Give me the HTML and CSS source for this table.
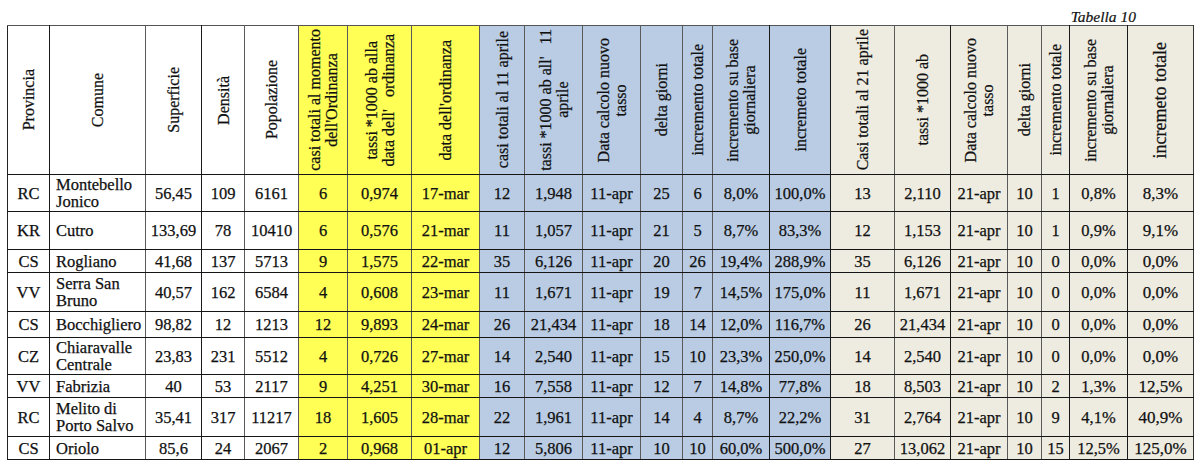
FILE: index.html
```html
<!DOCTYPE html>
<html lang="it">
<head>
<meta charset="utf-8">
<title>Tabella 10</title>
<link rel="stylesheet" href="styles.css">
</head>
<body>
<div class="wrap">
  <div class="caption">Tabella 10</div>
  <table class="grid">
    <colgroup>
      <col style="width:42px"><col style="width:96px"><col style="width:56px"><col style="width:43px"><col style="width:54px">
      <col style="width:49px"><col style="width:64px"><col style="width:68px">
      <col style="width:45px"><col style="width:58px"><col style="width:58px"><col style="width:42px"><col style="width:30px"><col style="width:57px"><col style="width:61px">
      <col style="width:64px"><col style="width:56px"><col style="width:57px"><col style="width:34px"><col style="width:28px"><col style="width:58px"><col style="width:66px">
    </colgroup>
    <thead>
      <tr class="head">
        <th><div class="hc"><span class="v">Provincia</span></div></th>
        <th><div class="hc"><span class="v">Comune</span></div></th>
        <th><div class="hc"><span class="v">Superficie</span></div></th>
        <th><div class="hc"><span class="v">Densità</span></div></th>
        <th><div class="hc"><span class="v">Popolazione</span></div></th>
        <th class="y"><div class="hc"><span class="v">casi totali al momento<br>dell'Ordinanza</span></div></th>
        <th class="y"><div class="hc"><span class="v">tassi *1000 ab alla<br>data dell'&nbsp;&nbsp; ordinanza</span></div></th>
        <th class="y"><div class="hc"><span class="v">data dell'ordinanza</span></div></th>
        <th class="b"><div class="hc"><span class="v">casi totali al 11 aprile</span></div></th>
        <th class="b"><div class="hc"><span class="v">tassi *1000 ab all'&nbsp;&nbsp; 11<br>aprile</span></div></th>
        <th class="b"><div class="hc"><span class="v">Data calcolo nuovo<br>tasso</span></div></th>
        <th class="b"><div class="hc"><span class="v">delta giorni</span></div></th>
        <th class="b"><div class="hc"><span class="v">incremento totale</span></div></th>
        <th class="b"><div class="hc"><span class="v">incremento su base<br>giornaliera</span></div></th>
        <th class="b"><div class="hc"><span class="v">incremeto totale</span></div></th>
        <th class="g"><div class="hc"><span class="v">Casi totali al 21 aprile</span></div></th>
        <th class="g"><div class="hc"><span class="v">tassi *1000 ab</span></div></th>
        <th class="g"><div class="hc"><span class="v">Data calcolo nuovo<br>tasso</span></div></th>
        <th class="g"><div class="hc"><span class="v">delta giorni</span></div></th>
        <th class="g"><div class="hc"><span class="v">incremento totale</span></div></th>
        <th class="g"><div class="hc"><span class="v">incremento su base<br>giornaliera</span></div></th>
        <th class="g last"><div class="hc"><span class="v">incremeto totale</span></div></th>
      </tr>
    </thead>
    <tbody>
      <tr class="r37">
        <td>RC</td><td class="name">Montebello<br>Jonico</td><td>56,45</td><td>109</td><td>6161</td>
        <td class="y">6</td><td class="y">0,974</td><td class="y">17-mar</td>
        <td class="b">12</td><td class="b">1,948</td><td class="b">11-apr</td><td class="b">25</td><td class="b">6</td><td class="b">8,0%</td><td class="b">100,0%</td>
        <td class="g">13</td><td class="g">2,110</td><td class="g">21-apr</td><td class="g">10</td><td class="g">1</td><td class="g">0,8%</td><td class="g last">8,3%</td>
      </tr>
      <tr class="r38">
        <td>KR</td><td class="name">Cutro</td><td>133,69</td><td>78</td><td>10410</td>
        <td class="y">6</td><td class="y">0,576</td><td class="y">21-mar</td>
        <td class="b">11</td><td class="b">1,057</td><td class="b">11-apr</td><td class="b">21</td><td class="b">5</td><td class="b">8,7%</td><td class="b">83,3%</td>
        <td class="g">12</td><td class="g">1,153</td><td class="g">21-apr</td><td class="g">10</td><td class="g">1</td><td class="g">0,9%</td><td class="g last">9,1%</td>
      </tr>
      <tr class="r23">
        <td>CS</td><td class="name">Rogliano</td><td>41,68</td><td>137</td><td>5713</td>
        <td class="y">9</td><td class="y">1,575</td><td class="y">22-mar</td>
        <td class="b">35</td><td class="b">6,126</td><td class="b">11-apr</td><td class="b">20</td><td class="b">26</td><td class="b">19,4%</td><td class="b">288,9%</td>
        <td class="g">35</td><td class="g">6,126</td><td class="g">21-apr</td><td class="g">10</td><td class="g">0</td><td class="g">0,0%</td><td class="g last">0,0%</td>
      </tr>
      <tr class="r39">
        <td>VV</td><td class="name">Serra San<br>Bruno</td><td>40,57</td><td>162</td><td>6584</td>
        <td class="y">4</td><td class="y">0,608</td><td class="y">23-mar</td>
        <td class="b">11</td><td class="b">1,671</td><td class="b">11-apr</td><td class="b">19</td><td class="b">7</td><td class="b">14,5%</td><td class="b">175,0%</td>
        <td class="g">11</td><td class="g">1,671</td><td class="g">21-apr</td><td class="g">10</td><td class="g">0</td><td class="g">0,0%</td><td class="g last">0,0%</td>
      </tr>
      <tr class="r26">
        <td>CS</td><td class="name">Bocchigliero</td><td>98,82</td><td>12</td><td>1213</td>
        <td class="y">12</td><td class="y">9,893</td><td class="y">24-mar</td>
        <td class="b">26</td><td class="b">21,434</td><td class="b">11-apr</td><td class="b">18</td><td class="b">14</td><td class="b">12,0%</td><td class="b">116,7%</td>
        <td class="g">26</td><td class="g">21,434</td><td class="g">21-apr</td><td class="g">10</td><td class="g">0</td><td class="g">0,0%</td><td class="g last">0,0%</td>
      </tr>
      <tr class="r37">
        <td>CZ</td><td class="name">Chiaravalle<br>Centrale</td><td>23,83</td><td>231</td><td>5512</td>
        <td class="y">4</td><td class="y">0,726</td><td class="y">27-mar</td>
        <td class="b">14</td><td class="b">2,540</td><td class="b">11-apr</td><td class="b">15</td><td class="b">10</td><td class="b">23,3%</td><td class="b">250,0%</td>
        <td class="g">14</td><td class="g">2,540</td><td class="g">21-apr</td><td class="g">10</td><td class="g">0</td><td class="g">0,0%</td><td class="g last">0,0%</td>
      </tr>
      <tr class="r23">
        <td>VV</td><td class="name">Fabrizia</td><td>40</td><td>53</td><td>2117</td>
        <td class="y">9</td><td class="y">4,251</td><td class="y">30-mar</td>
        <td class="b">16</td><td class="b">7,558</td><td class="b">11-apr</td><td class="b">12</td><td class="b">7</td><td class="b">14,8%</td><td class="b">77,8%</td>
        <td class="g">18</td><td class="g">8,503</td><td class="g">21-apr</td><td class="g">10</td><td class="g">2</td><td class="g">1,3%</td><td class="g last">12,5%</td>
      </tr>
      <tr class="r39">
        <td>RC</td><td class="name">Melito di<br>Porto Salvo</td><td>35,41</td><td>317</td><td>11217</td>
        <td class="y">18</td><td class="y">1,605</td><td class="y">28-mar</td>
        <td class="b">22</td><td class="b">1,961</td><td class="b">11-apr</td><td class="b">14</td><td class="b">4</td><td class="b">8,7%</td><td class="b">22,2%</td>
        <td class="g">31</td><td class="g">2,764</td><td class="g">21-apr</td><td class="g">10</td><td class="g">9</td><td class="g">4,1%</td><td class="g last">40,9%</td>
      </tr>
      <tr class="r23">
        <td>CS</td><td class="name">Oriolo</td><td>85,6</td><td>24</td><td>2067</td>
        <td class="y">2</td><td class="y">0,968</td><td class="y">01-apr</td>
        <td class="b">12</td><td class="b">5,806</td><td class="b">11-apr</td><td class="b">10</td><td class="b">10</td><td class="b">60,0%</td><td class="b">500,0%</td>
        <td class="g">27</td><td class="g">13,062</td><td class="g">21-apr</td><td class="g">10</td><td class="g">15</td><td class="g">12,5%</td><td class="g last">125,0%</td>
      </tr>
    </tbody>
  </table>
</div>
</body>
</html>
```

FILE: styles.css
```css
html, body {
  margin: 0;
  padding: 0;
  background: #ffffff;
}

body {
  font-family: "Liberation Serif", "Times New Roman", serif;
  color: #111111;
}

.wrap {
  padding: 8px 0 0 7px;
  width: 1187px;
}

.caption {
  font-style: italic;
  font-size: 15.5px;
  line-height: 17px;
  height: 17px;
  text-align: right;
  padding-right: 58px;
  -webkit-text-stroke: 0.2px #111;
}

.grid {
  border-collapse: collapse;
  table-layout: fixed;
  width: 1187px;
  font-size: 16.5px;
  line-height: 17px;
  -webkit-text-stroke: 0.25px #111;
}

.grid th,
.grid td {
  border: 1px solid #5a5a5a;
  border-top-color: #151515;
  border-bottom-color: #151515;
  padding: 0;
  text-align: center;
  vertical-align: middle;
  white-space: nowrap;
  overflow: hidden;
}

.grid th {
  font-weight: normal;
  font-size: 16px;
}

.head {
  height: 149px;
}

.head th:first-child,
.grid td:first-child {
  border-left-color: #222;
}

.grid thead th {
  border-top-color: #555;
}

.hc {
  display: flex;
  align-items: center;
  justify-content: center;
  height: 147px;
}

.v {
  writing-mode: vertical-rl;
  transform: rotate(180deg);
  text-align: center;
  white-space: nowrap;
  line-height: 17px;
}

.grid td.name {
  text-align: left;
  padding-left: 6px;
}

/* darker separators */
.grid tr > :nth-child(1),
.grid tr > :nth-child(3),
.grid tr > :nth-child(14),
.grid tr > :nth-child(15),
.grid tr > :nth-child(17),
.grid tr > :nth-child(20),
.grid tr > :nth-child(21) {
  border-right-color: #1a1a1a;
}

.grid tr > :nth-child(22) {
  border-right-color: #333;
}

.y {
  background: #ffff56;
}

.b {
  background: #b9cce4;
}

.g {
  background: #eeece1;
}

.grid th.last {
  font-size: 18px;
}

.grid td.last {
  font-size: 17px;
}

.r37 { height: 37px; }
.r38 { height: 38px; }
.r23 { height: 23px; }
.r39 { height: 39px; }
.r26 { height: 26px; }
```
